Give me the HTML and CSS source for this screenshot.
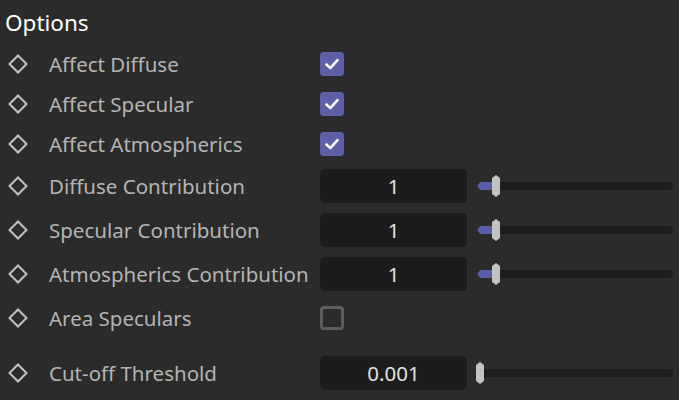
FILE: index.html
```html
<!doctype html>
<html lang="en">
<head>
    <meta charset="UTF-8">
    <title>Options</title>
    <link rel="stylesheet" href="styles.css">
</head>
<body>
<h1 class="title">Options</h1>
<div class="options">
    <div class="row">
        <span class="key"><span class="diamond"></span></span>
        <span class="label">Affect Diffuse</span>
        <span class="check on"><svg viewBox="0 0 24 24" width="24" height="24"><path d="M6.5 12.5l3.8 3.6 7.2-8" fill="none" stroke="#fff" stroke-width="2.6" stroke-linecap="round" stroke-linejoin="round"/></svg></span>
    </div>
    <div class="row">
        <span class="key"><span class="diamond"></span></span>
        <span class="label">Affect Specular</span>
        <span class="check on"><svg viewBox="0 0 24 24" width="24" height="24"><path d="M6.5 12.5l3.8 3.6 7.2-8" fill="none" stroke="#fff" stroke-width="2.6" stroke-linecap="round" stroke-linejoin="round"/></svg></span>
    </div>
    <div class="row">
        <span class="key"><span class="diamond"></span></span>
        <span class="label">Affect Atmospherics</span>
        <span class="check on"><svg viewBox="0 0 24 24" width="24" height="24"><path d="M6.5 12.5l3.8 3.6 7.2-8" fill="none" stroke="#fff" stroke-width="2.6" stroke-linecap="round" stroke-linejoin="round"/></svg></span>
    </div>
    <div class="row tall">
        <span class="key"><span class="diamond"></span></span>
        <span class="label">Diffuse Contribution</span>
        <span class="field">1</span>
        <span class="slider"><span class="fill" style="width: 18px"></span><span class="handle" style="left: 15px"></span></span>
    </div>
    <div class="row tall">
        <span class="key"><span class="diamond"></span></span>
        <span class="label">Specular Contribution</span>
        <span class="field">1</span>
        <span class="slider"><span class="fill" style="width: 18px"></span><span class="handle" style="left: 15px"></span></span>
    </div>
    <div class="row tall">
        <span class="key"><span class="diamond"></span></span>
        <span class="label">Atmospherics Contribution</span>
        <span class="field">1</span>
        <span class="slider"><span class="fill" style="width: 18px"></span><span class="handle" style="left: 15px"></span></span>
    </div>
    <div class="row tall">
        <span class="key"><span class="diamond"></span></span>
        <span class="label">Area Speculars</span>
        <span class="check"></span>
    </div>
    <div class="row tall gap">
        <span class="key"><span class="diamond"></span></span>
        <span class="label">Cut-off Threshold</span>
        <span class="field">0.001</span>
        <span class="slider"><span class="fill" style="width: 0"></span><span class="handle" style="left: -1px"></span></span>
    </div>
</div>
</body>
</html>
```

FILE: styles.css
```css
body {
    margin: 0;
    background-color: #2b2b2b;
    font-family: "Noto Sans", "Open Sans", sans-serif;
    color: #b4b4b4;
    width: 679px;
    height: 400px;
    overflow: hidden;
}

.title {
    margin: 0;
    padding: 8px 0 0 5px;
    height: 36px;
    font-size: 22.5px;
    font-weight: normal;
    line-height: 30px;
    color: #ffffff;
}

.row {
    display: flex;
    align-items: center;
    height: 40px;
}

.row.tall {
    height: 44px;
}

.row.gap {
    margin-top: 11px;
}

.key {
    width: 32px;
    height: 32px;
    margin-left: 2px;
    border-radius: 50%;
    box-shadow: inset 0 0 0 1px #303030;
    display: flex;
    align-items: center;
    justify-content: center;
}

.diamond {
    width: 10px;
    height: 10px;
    border: 2px solid #c4c4c4;
    transform: rotate(45deg);
}

.label {
    width: 271px;
    padding-left: 15px;
    font-size: 20.5px;
    white-space: nowrap;
}

.check {
    width: 24px;
    height: 24px;
    box-sizing: border-box;
    border-radius: 4px;
    border: 3px solid #5e5e5e;
}

.check.on {
    border: none;
    background-color: #5d5fa8;
}

.check svg {
    display: block;
}

.field {
    width: 147px;
    height: 34px;
    border-radius: 5px;
    background-color: #1c1c1c;
    color: #e2e2e2;
    font-size: 20.5px;
    line-height: 34px;
    text-align: center;
}

.slider {
    position: relative;
    flex: 1;
    height: 8px;
    margin: 0 6px 0 10px;
    border-radius: 4px;
    background-color: #1d1d1d;
}

.fill {
    position: absolute;
    left: 0;
    top: 0;
    height: 8px;
    border-radius: 4px 0 0 4px;
    background-color: #5b5ea6;
    clip-path: polygon(3px 0, 100% 0, 100% 100%, 3px 100%, 0 50%);
}

.handle {
    position: absolute;
    top: -7px;
    width: 8px;
    height: 22px;
    background-color: #c2c2c2;
    clip-path: polygon(50% 0, 100% 3px, 100% 19px, 50% 100%, 0 19px, 0 3px);
}
```
